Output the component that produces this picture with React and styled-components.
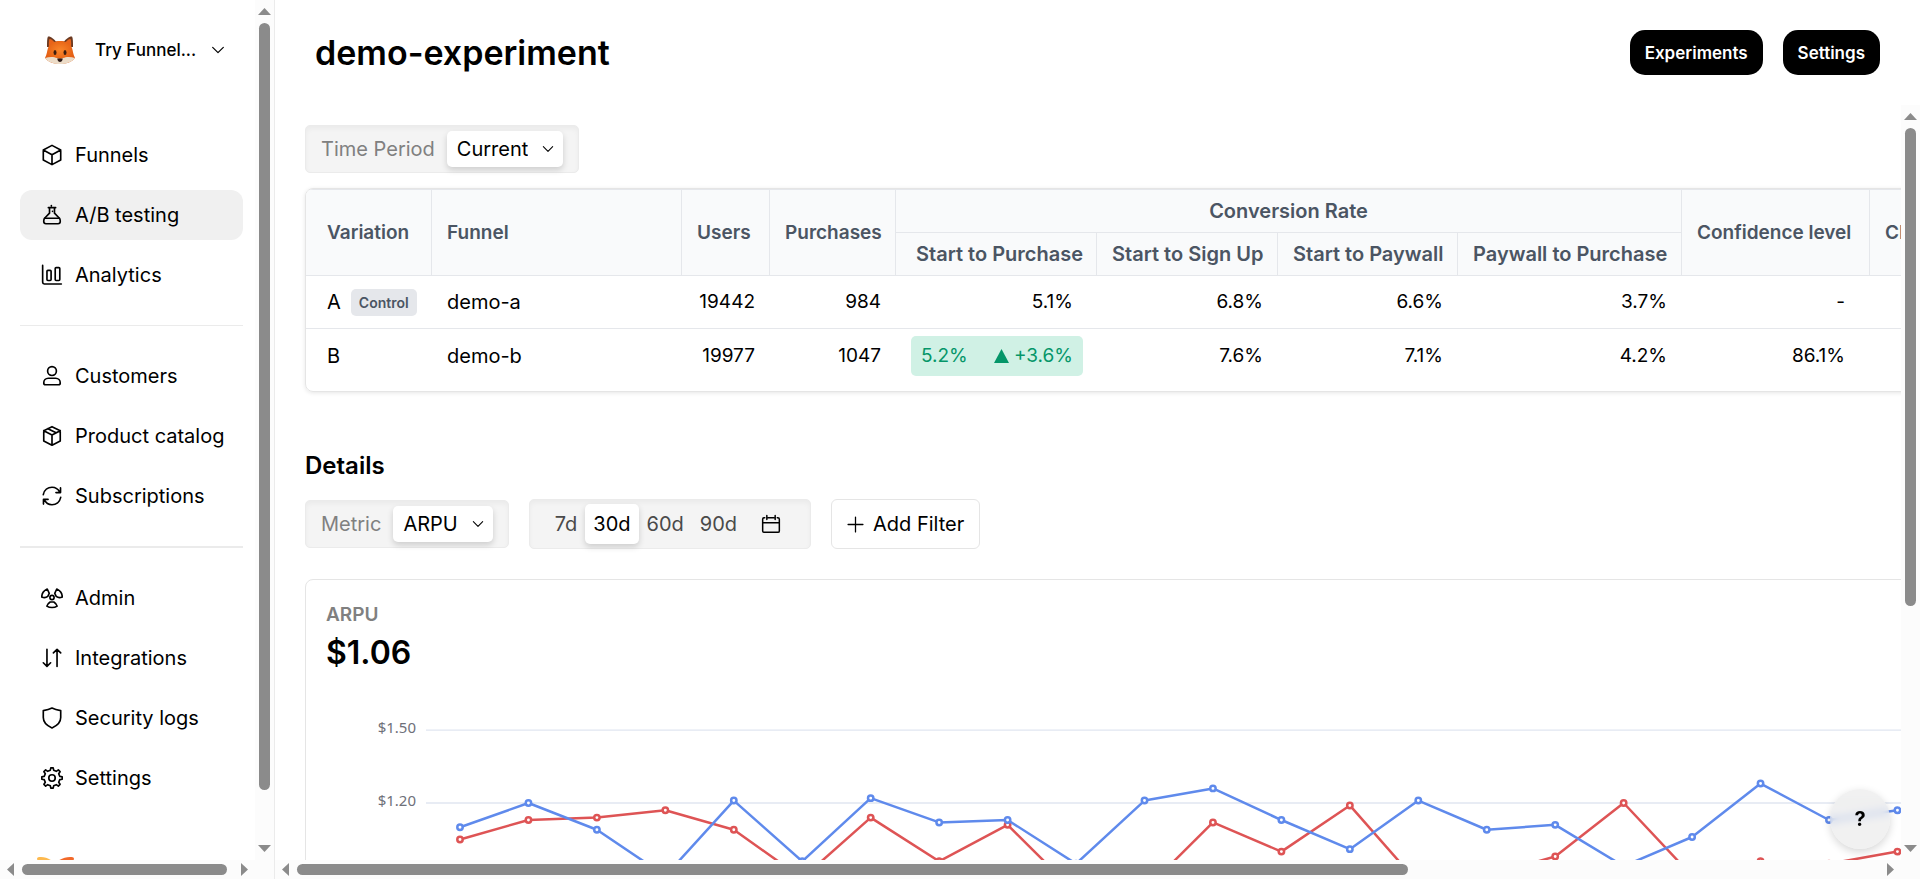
import styled, { createGlobalStyle } from "styled-components";

const GlobalStyle = createGlobalStyle`
  * {
    box-sizing: border-box;
  }

  body {
    margin: 0;
    background: #fff;
    color: #000;
    font-family: Inter, "Liberation Sans", sans-serif;
    font-size: 20px;
    line-height: 24px;
  }

  button, select {
    font: inherit;
    color: inherit;
  }
`;

const Page = styled.div`
  display: flex;
  height: 100vh;
  overflow: hidden;
`;

/* ---------- scroll bars ---------- */

const Bar = styled.div`
  display: flex;
  flex-direction: ${(p) => (p.$vertical ? "column" : "row")};
  align-items: center;
  flex: 0 0 19px;
  gap: 8px;
  padding: ${(p) => (p.$vertical ? "8px 0" : "0 7px")};
  background: #fcfcfc;
`;

const Track = styled.div`
  flex: 1;
  display: flex;
  flex-direction: ${(p) => (p.$vertical ? "column" : "row")};
  min-width: 0;
  min-height: 0;
`;

const Thumb = styled.div`
  flex: 0 0 ${(p) => p.$size};
  ${(p) => (p.$vertical ? "width: 11px" : "height: 11px")};
  border-radius: 6px;
  background: #8b8b8b;
`;

const Corner = styled.div`
  width: 19px;
  background: #fcfcfc;
`;

const BottomBar = styled.div`
  display: flex;
  flex: 0 0 19px;

  > :first-child {
    flex: 1;
  }
`;

const arrows = {
  up: "M0 7 L6.5 0 L13 7 Z",
  down: "M0 0 L13 0 L6.5 7 Z",
  left: "M7 0 L7 13 L0 6.5 Z",
  right: "M0 0 L7 6.5 L0 13 Z",
};

function Arrow({ dir }) {
  const vertical = dir === "up" || dir === "down";
  return (
    <svg width={vertical ? 13 : 7} height={vertical ? 7 : 13} fill="#8b8b8b" aria-hidden="true">
      <path d={arrows[dir]} />
    </svg>
  );
}

function ScrollBar({ vertical, size }) {
  return (
    <Bar $vertical={vertical}>
      <Arrow dir={vertical ? "up" : "left"} />
      <Track $vertical={vertical}>
        <Thumb $vertical={vertical} $size={size} />
      </Track>
      <Arrow dir={vertical ? "down" : "right"} />
    </Bar>
  );
}

/* ---------- icons ---------- */

const Svg = styled.svg`
  flex: none;
  display: block;
  fill: none;
  stroke: currentColor;
  stroke-width: ${(p) => p.$weight || 1.5}px;
  stroke-linecap: round;
  stroke-linejoin: round;
`;

const icons = {
  cube: <path d="M12 1.5 21.5 6.6V17.4L12 22.5 2.5 17.4V6.6Z M2.5 6.6 12 11.8 21.5 6.6 M12 11.8V22.5" />,
  flask: (
    <>
      <path d="M11.3 1.6v.6M8 4h8M9.3 4v6L4.2 15.3C3.4 16.2 3 17 3 18.2v1c0 1.5 1 2.3 2.4 2.3h13.2c1.4 0 2.4-.8 2.4-2.3v-1c0-1.2-.4-2-1.2-2.9L14.7 10V4" />
      <path d="M3.8 15.5h16.4M12.5 8h.1" />
    </>
  ),
  chart: (
    <>
      <path d="M1.8 1.5V20c0 1.2.6 1.8 1.8 1.8h18.6" />
      <rect x="6.5" y="7" width="4.5" height="11" rx="1" />
      <rect x="15.5" y="4" width="5" height="14" rx="1" />
    </>
  ),
  user: (
    <>
      <circle cx="12" cy="6.6" r="4.8" />
      <path d="M8 14.5h8c3 0 5 2.2 5 5 0 1.2-.8 2-2 2H5c-1.2 0-2-.8-2-2 0-2.8 2-5 5-5Z" />
    </>
  ),
  box: <path d="M12 1.8 21 6.2v11.3L12 22 3 17.5V6.2Z M3 6.2l9 4.6 9-4.6 M12 10.8V22 M7.5 4l9 4.5" />,
  refresh: <path d="M2.5 10.5C3.5 5.5 7.5 2.5 12 2.5c3.8 0 6.8 2 8.500 5.500M21.300 3.200V8.300H16.300M21.500 13.500C20.500 18.500 16.500 21.500 12 21.500c-3.800 0-6.800-2-8.500-5.500M2.700 20.800V15.700H7.700" />,
  radiation: (
    <>
      <circle cx="12" cy="11.5" r="2.3" />
      <path d="M6.8 2.2C3.4 3.8.8 7 .8 11c2.300 1 5 .6 6.600-.7L9 7Z" />
      <path d="M17.200 2.200c3.400 1.600 6 4.800 6 8.800-2.300 1-5 .6-6.600-.7L15 7Z" />
      <path d="M10 16.400h4c1.500 1 3.300 3 3.600 4.500-3 2-8.200 2-11.200 0C6.700 19.400 8.500 17.400 10 16.400Z" />
    </>
  ),
  sort: <path d="M6.500 2.500v18.500M2.500 17.200l4 4 4-4M17.500 21.200V2.700M13.500 6.500l4-4 4 4" />,
  shield: <path d="M12 1.200c3 1.500 6.200 2.200 9.500 2.700v7.600c0 5.200-4 9-9.500 11.300C6.500 20.500 2.500 16.700 2.500 11.500V3.900C5.800 3.400 9 2.700 12 1.200Z" />,
  gear: (
    <>
      <circle cx="12" cy="12" r="3.500" />
      <path d="M10.200 3.500 10.700.9h2.600l.5 2.600 2.900 1.200 2.200-1.500 1.900 1.900-1.500 2.200 1.200 2.900 2.600.5v2.600l-2.600.5-1.200 2.900 1.500 2.200-1.900 1.900-2.200-1.500-2.900 1.200-.5 2.600h-2.600l-.5-2.600-2.900-1.200-2.200 1.500-1.900-1.900 1.500-2.200-1.200-2.900-2.600-.5v-2.600l2.600-.5 1.200-2.900-1.500-2.200 1.900-1.900 2.200 1.500Z" />
    </>
  ),
  chevron: <path d="M4 8l8 8 8-8" />,
  calendar: <path d="M4.500 4.500H3.800c-1 0-1.800.8-1.800 1.800v14c0 1 .8 1.700 1.800 1.700h16.400c1 0 1.800-.7 1.800-1.700v-14c0-1-.8-1.800-1.800-1.800h-.7M2 10.500h20M8.500 4.500h7M7 1.800v4.700M17 1.800v4.700" />,
  plus: <path d="M12 1.500v21M1.500 12h21" />,
};

function Icon({ name, size = 22, weight }) {
  return (
    <Svg width={size} height={size} viewBox="0 0 24 24" $weight={weight} aria-hidden="true">
      {icons[name]}
    </Svg>
  );
}

function Fox() {
  return (
    <svg width="30" height="30" viewBox="0 0 30 30" aria-hidden="true">
      <defs>
        <radialGradient id="fur" cx="50%" cy="40%" r="65%">
          <stop offset="0" stopColor="#f9862a" />
          <stop offset="1" stopColor="#dd520c" />
        </radialGradient>
      </defs>
      <path d="M2 12C2 7 2 3 3 1.500C5.500 1 9 4 11 6.500H19C21 4 24.500 1 27 1.500C28 3 28 7 28 12Z" fill="#6b3a22" />
      <path d="M4 12C3.500 8 4 5 4.500 4C6.500 4 8.500 6 10 8M26 12C26.500 8 26 5 25.500 4C23.500 4 21.500 6 20 8" fill="#e8641b" />
      <path d="M3 13C5 8 9 6 15 6S25 8 27 13C28 16 28 19 30 23C28 26 22 29 15 29S2 26 0 23C2 19 2 16 3 13Z" fill="url(#fur)" />
      <path d="M0 23C4 21.500 9 21.500 12 23L15 24L18 23C21 21.500 26 21.500 30 23C27 27 21 29 15 29S3 27 0 23Z" fill="#ecdcc8" />
      <ellipse cx="10" cy="17.500" rx="1.500" ry="2.500" fill="#3a1d10" />
      <ellipse cx="20" cy="17.500" rx="1.500" ry="2.500" fill="#3a1d10" />
      <path d="M12.300 23.500H17.700C17.700 26 16 27 15 27S12.300 26 12.300 23.500Z" fill="#2b1b18" />
    </svg>
  );
}

/* ---------- sidebar ---------- */

const Sidebar = styled.aside`
  flex: 0 0 275px;
  display: flex;
  flex-direction: column;
  min-width: 0;
  border-right: 1px solid #ebebeb;
`;

const SidebarBody = styled.div`
  flex: 1;
  display: flex;
  min-height: 0;
`;

const SidebarContent = styled.div`
  flex: 1;
  min-width: 0;
  overflow: hidden;
  padding: 25px 12px 0 20px;
`;

const Workspace = styled.button`
  display: flex;
  align-items: center;
  width: 100%;
  height: 50px;
  margin-bottom: 55px;
  padding: 0 17px 0 25px;
  border: 0;
  background: none;
  font-size: 17px;
  font-weight: 500;

  span {
    flex: 1;
    padding-left: 20px;
    text-align: left;
    white-space: nowrap;
  }
`;

const NavGroup = styled.ul`
  display: flex;
  flex-direction: column;
  gap: 10px;
  margin: 0;
  padding: 0;
  list-style: none;

  & + & {
    margin-top: 25px;
    padding-top: 25px;
    border-top: 1px solid #ebebeb;
  }

  &:last-child {
    border-top-width: 2px;
  }
`;

const NavLink = styled.a`
  display: flex;
  align-items: center;
  gap: 12px;
  height: 50px;
  padding-left: 21px;
  border-radius: 12px;
  background: ${(p) => (p.$active ? "#f0f0f0" : "none")};
  color: #000;
  text-decoration: none;
  white-space: nowrap;
`;

const Brand = styled.div`
  margin: 54px 0 0 17px;

  svg {
    display: block;
  }
`;

const navGroups = [
  [
    { icon: "cube", label: "Funnels" },
    { icon: "flask", label: "A/B testing", active: true },
    { icon: "chart", label: "Analytics" },
  ],
  [
    { icon: "user", label: "Customers" },
    { icon: "box", label: "Product catalog" },
    { icon: "refresh", label: "Subscriptions" },
  ],
  [
    { icon: "radiation", label: "Admin" },
    { icon: "sort", label: "Integrations" },
    { icon: "shield", label: "Security logs" },
    { icon: "gear", label: "Settings" },
  ],
];

function SideNav() {
  return (
    <Sidebar>
      <SidebarBody>
        <SidebarContent>
          <Workspace>
            <Fox />
            <span>Try Funnel...</span>
            <Icon name="chevron" size={16} weight={1.8} />
          </Workspace>
          <nav>
            {navGroups.map((group) => (
              <NavGroup key={group[0].label}>
                {group.map((item) => (
                  <li key={item.label}>
                    <NavLink href="#" $active={item.active}>
                      <Icon name={item.icon} weight={1.8} />
                      {item.label}
                    </NavLink>
                  </li>
                ))}
              </NavGroup>
            ))}
          </nav>
          <Brand>
            <svg width="37" height="30" viewBox="0 0 37 30" aria-hidden="true">
              <path d="M0 2C0 0 2 0 4 0C9 0 13 2 18 6L8 20Z" fill="#fdb94e" />
              <path d="M37 2C37 0 35 0 33 0C28 0 23 2 18 6L29 20Z" fill="#f2692a" />
            </svg>
          </Brand>
        </SidebarContent>
        <ScrollBar vertical size="94.2%" />
      </SidebarBody>
      <BottomBar>
        <ScrollBar size="97%" />
        <Corner />
      </BottomBar>
    </Sidebar>
  );
}

/* ---------- main ---------- */

const Main = styled.main`
  flex: 1;
  display: flex;
  flex-direction: column;
  min-width: 0;
`;

const Header = styled.header`
  flex: 0 0 105px;
  display: flex;
  align-items: center;
  gap: 20px;
  padding: 0 40px;
`;

const Title = styled.h1`
  flex: 1;
  margin: 0;
  font-size: 34px;
  line-height: 40px;
  font-weight: 600;
`;

const DarkButton = styled.button`
  height: 45px;
  padding: 0 15px;
  border: 0;
  border-radius: 15px;
  background: #000;
  color: #fff;
  font-size: 17px;
  font-weight: 600;
`;

const Body = styled.div`
  flex: 1;
  display: flex;
  min-height: 0;
`;

const Viewport = styled.div`
  flex: 1;
  min-width: 0;
  overflow: hidden;
  padding: 20px 0 0 30px;
`;

const Content = styled.div`
  width: max-content;
  min-width: 100%;
`;

const Filters = styled.div`
  display: flex;
  align-items: center;
  gap: 20px;
`;

const Well = styled.div`
  display: flex;
  align-items: center;
  height: ${(p) => (p.$tall ? 50 : 48)}px;
  padding: 0 15px;
  border: 1px solid #ebebeb;
  border-radius: 5px;
  background: #f4f4f4;
  box-shadow: inset 0 3px 5px rgba(0, 0, 0, 0.04);
`;

const Label = styled.label`
  margin-right: 12px;
  color: #808080;
`;

const SelectBox = styled.div`
  position: relative;

  svg {
    position: absolute;
    top: 11px;
    right: 8px;
    pointer-events: none;
  }
`;

const Select = styled.select`
  appearance: none;
  field-sizing: content;
  display: block;
  height: 36px;
  padding: 0 35px 0 10px;
  border: 0;
  border-radius: 5px;
  background: #fff;
  box-shadow: 0 3px 6px rgba(0, 0, 0, 0.16);
`;

const RangeButton = styled.button`
  height: 40px;
  padding: 0 8px;
  border: 0;
  border-radius: 5px;
  background: ${(p) => (p.$active ? "#fff" : "none")};
  box-shadow: ${(p) => (p.$active ? "0 3px 6px rgba(0, 0, 0, 0.16)" : "none")};
  color: ${(p) => (p.$active ? "#000" : "#4a4a4a")};

  &:first-child {
    margin-left: 2px;
  }

  &:last-child {
    margin-left: 8px;
    padding-right: 14px;
    color: #000;
  }
`;

const AddFilter = styled.button`
  display: flex;
  align-items: center;
  gap: 9px;
  height: 50px;
  padding: 0 15px;
  border: 1px solid #e5e5e5;
  border-radius: 6px;
  background: #fff;
`;

const SectionTitle = styled.h2`
  margin: 59px 0 18px;
  font-size: 24px;
  line-height: 30px;
  font-weight: 600;
`;

function SelectField({ id, label, value }) {
  return (
    <Well>
      <Label htmlFor={id}>{label}</Label>
      <SelectBox>
        <Select id={id} defaultValue={value}>
          <option>{value}</option>
        </Select>
        <Icon name="chevron" size={14} weight={1.8} />
      </SelectBox>
    </Well>
  );
}

/* ---------- results table ---------- */

const TableCard = styled.div`
  width: max-content;
  margin-top: 15px;
  padding-bottom: 9px;
  overflow: hidden;
  border: 1px solid #e5e5e5;
  border-radius: 8px;
  box-shadow: 0 1px 4px rgba(0, 0, 0, 0.1);
`;

const Table = styled.table`
  table-layout: fixed;
  width: 2008px;
  border-collapse: separate;
  border-spacing: 0;
  border-top: 1px solid #e5e7eb;
`;

const Th = styled.th`
  height: 43px;
  padding: 0 0 0 ${(p) => p.$pad || 15}px;
  border-right: 1px solid #e5e7eb;
  border-bottom: 1px solid #e5e7eb;
  background: #f9fafb;
  color: #4b5563;
  font-size: ${(p) => (p.$rate ? 20 : 19)}px;
  font-weight: 600;
  text-align: left;
  white-space: nowrap;

  &[colspan] {
    padding: 0;
    text-align: center;
  }
`;

const Td = styled.td`
  height: 53px;
  padding: 0 ${(p) => p.$right || 15}px 0 ${(p) => p.$pad || 15}px;
  border-bottom: ${(p) => (p.$last ? 0 : 1)}px solid #e5e7eb;
  font-size: ${(p) => (p.$text ? 20 : 19)}px;
  text-align: ${(p) => (p.$text ? "left" : "right")};
  white-space: nowrap;
`;

const Variation = styled.div`
  display: flex;
  align-items: center;
  gap: 10px;
`;

const Badge = styled.span`
  padding: 0 8px;
  border-radius: 5px;
  background: #e5e7eb;
  color: #4b5563;
  font-size: 14px;
  line-height: 27px;
  font-weight: 600;
`;

const Uplift = styled.div`
  display: flex;
  align-items: center;
  justify-content: space-between;
  height: 40px;
  margin-right: -10px;
  padding: 0 10px;
  border-radius: 5px;
  background: #d0f1e5;
  color: #059669;

  span {
    display: flex;
    align-items: center;
    gap: 5px;
  }
`;

const columnWidths = [126, 250, 88, 126, 201, 181, 180, 224, 188, 444];

const rows = [
  { name: "A", control: true, funnel: "demo-a", users: 19442, purchases: 984, rate: "5.1%", signUp: "6.8%", paywall: "6.6%", paid: "3.7%", confidence: "-" },
  { name: "B", funnel: "demo-b", users: 19977, purchases: 1047, rate: "5.2%", uplift: "+3.6%", signUp: "7.6%", paywall: "7.1%", paid: "4.2%", confidence: "86.1%" },
];

function ResultsTable() {
  return (
    <TableCard>
      <Table>
        <colgroup>
          {columnWidths.map((width, i) => (
            <col key={i} width={width} />
          ))}
        </colgroup>
        <thead>
          <tr>
            <Th rowSpan={2} $pad={21}>Variation</Th>
            <Th rowSpan={2}>Funnel</Th>
            <Th rowSpan={2}>Users</Th>
            <Th rowSpan={2}>Purchases</Th>
            <Th colSpan={4} $rate>Conversion Rate</Th>
            <Th rowSpan={2}>Confidence level</Th>
            <Th rowSpan={2}>CI</Th>
          </tr>
          <tr>
            <Th $rate $pad={20}>Start to Purchase</Th>
            <Th $rate>Start to Sign Up</Th>
            <Th $rate>Start to Paywall</Th>
            <Th $rate>Paywall to Purchase</Th>
          </tr>
        </thead>
        <tbody>
          {rows.map((row, i) => {
            const last = i === rows.length - 1;
            return (
              <tr key={row.name}>
                <Td $text $pad={21} $last={last}>
                  <Variation>
                    {row.name}
                    {row.control && <Badge>Control</Badge>}
                  </Variation>
                </Td>
                <Td $text $last={last}>{row.funnel}</Td>
                <Td $last={last}>{row.users}</Td>
                <Td $last={last}>{row.purchases}</Td>
                <Td $right={24} $last={last}>
                  {row.uplift ? (
                    <Uplift>
                      {row.rate}
                      <span>
                        <svg width="15" height="14" fill="currentColor" aria-hidden="true">
                          <path d="M7.500 0 15 14H0Z" />
                        </svg>
                        {row.uplift}
                      </span>
                    </Uplift>
                  ) : (
                    row.rate
                  )}
                </Td>
                <Td $last={last}>{row.signUp}</Td>
                <Td $last={last}>{row.paywall}</Td>
                <Td $last={last}>{row.paid}</Td>
                <Td $right={25} $last={last}>{row.confidence}</Td>
                <Td $last={last} />
              </tr>
            );
          })}
        </tbody>
      </Table>
    </TableCard>
  );
}

/* ---------- chart ---------- */

const ChartCard = styled.section`
  margin-top: 30px;
  padding: 20px;
  border: 1px solid #e5e5e5;
  border-radius: 8px;
`;

const ChartLabel = styled.h3`
  margin: 3px 0 0;
  color: #808080;
  font-size: 19px;
  line-height: 24px;
  font-weight: 600;
`;

const ChartValue = styled.p`
  margin: 6px 0 0;
  font-size: 32px;
  line-height: 40px;
  font-weight: 600;
`;

const Plot = styled.svg`
  display: block;
  margin-top: 27px;

  text {
    fill: #6e7079;
    font-family: "Noto Sans", sans-serif;
    font-size: 15px;
    text-anchor: end;
  }
`;

const variantB = [1.1, 1.2, 1.09, 0.9, 1.21, 0.96, 1.22, 1.12, 1.13, 0.95, 1.21, 1.26, 1.13, 1.01, 1.21, 1.09, 1.11, 0.94, 1.06, 1.28, 1.13, 1.17, 1.19];
const variantA = [1.05, 1.13, 1.14, 1.17, 1.09, 0.89, 1.14, 0.96, 1.11, 0.83, 0.84, 1.12, 1.0, 1.19, 0.87, 0.9, 0.98, 1.2, 0.9, 0.96, 0.95, 1.0, 1.02];

const ticks = [1.5, 1.2];
const xAt = (i) => 134 + i * 68.45;
const yAt = (value) => 103 - (value - 1.2) * 243;

function Series({ values, color }) {
  return (
    <g stroke={color} strokeWidth="2.5">
      <polyline fill="none" strokeLinejoin="bevel" points={values.map((v, i) => `${xAt(i)},${yAt(v)}`).join(" ")} />
      {values.map((v, i) => (
        <circle key={i} cx={xAt(i)} cy={yAt(v)} r="2.7" fill="#fff" />
      ))}
    </g>
  );
}

function Chart() {
  return (
    <ChartCard>
      <ChartLabel>ARPU</ChartLabel>
      <ChartValue>$1.06</ChartValue>
      <Plot width="1900" height="300" role="img" aria-label="ARPU by day">
        {ticks.map((tick) => (
          <g key={tick}>
            <line x1="100" x2="1900" y1={yAt(tick)} y2={yAt(tick)} stroke="#e0e6f1" strokeWidth="1.3" />
            <text x="90" y={yAt(tick) + 3}>{`$${tick.toFixed(2)}`}</text>
          </g>
        ))}
        <Series values={variantA} color="#de5455" />
        <Series values={variantB} color="#5f8aec" />
      </Plot>
    </ChartCard>
  );
}

const HelpButton = styled.button`
  position: fixed;
  right: 30px;
  bottom: 30px;
  width: 60px;
  height: 60px;
  padding: 0;
  border: 0;
  border-radius: 50%;
  background: rgba(232, 232, 232, 0.6);
  backdrop-filter: blur(4px);
  box-shadow: 0 3px 8px rgba(0, 0, 0, 0.16);
  font-weight: 700;
`;

function App() {
  return (
    <>
      <GlobalStyle />
      <Page>
        <SideNav />
        <Main>
          <Header>
            <Title>demo-experiment</Title>
            <DarkButton>Experiments</DarkButton>
            <DarkButton>Settings</DarkButton>
          </Header>
          <Body>
            <Viewport>
              <Content>
                <Filters>
                  <SelectField id="period" label="Time Period" value="Current" />
                </Filters>
                <ResultsTable />
                <SectionTitle>Details</SectionTitle>
                <Filters>
                  <SelectField id="metric" label="Metric" value="ARPU" />
                  <Well $tall>
                    <RangeButton>7d</RangeButton>
                    <RangeButton $active>30d</RangeButton>
                    <RangeButton>60d</RangeButton>
                    <RangeButton>90d</RangeButton>
                    <RangeButton aria-label="Pick dates">
                      <Icon name="calendar" size={20} weight={1.8} />
                    </RangeButton>
                  </Well>
                  <AddFilter>
                    <Icon name="plus" size={17} weight={1.8} />
                    Add Filter
                  </AddFilter>
                </Filters>
                <Chart />
              </Content>
            </Viewport>
            <ScrollBar vertical size="67.4%" />
          </Body>
          <BottomBar>
            <ScrollBar size="70.2%" />
            <Corner />
          </BottomBar>
        </Main>
        <HelpButton aria-label="Help">?</HelpButton>
      </Page>
    </>
  );
}

export default App;
